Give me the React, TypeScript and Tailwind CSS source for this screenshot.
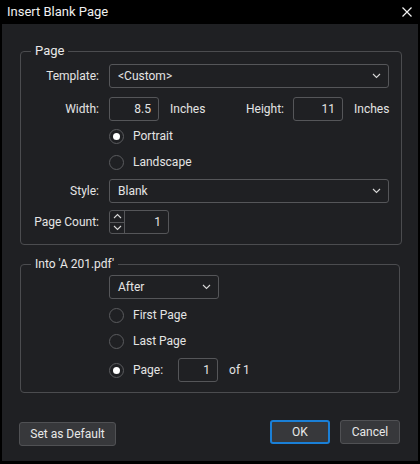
import React from 'react';

const Chevron: React.FC<{ up?: boolean; className?: string }> = ({ up, className }) => (
  <svg width="9" height="6" viewBox="0 0 9 6" className={className} fill="none" stroke="#d8d8d8" strokeWidth="1.1">
    {up ? <path d="M1 5 L4.5 1.5 L8 5" /> : <path d="M1 1 L4.5 4.5 L8 1" />}
  </svg>
);

const Select: React.FC<{ value: string; className?: string }> = ({ value, className }) => (
  <div className={`h-[24px] flex items-center justify-between border border-[#555659] rounded-[3px] pl-[8px] pr-[7px] ${className ?? ''}`}>
    <span>{value}</span>
    <Chevron />
  </div>
);

const Radio: React.FC<{ checked?: boolean; label: string }> = ({ checked, label }) => (
  <div className="flex items-center">
    <div className="w-[15px] h-[15px] rounded-full border border-[#5a5b5e] flex items-center justify-center">
      {checked && <div className="w-[7px] h-[7px] rounded-full bg-white" />}
    </div>
    <span className="ml-[9px]">{label}</span>
  </div>
);

const NumBox: React.FC<{ value: string; className?: string }> = ({ value, className }) => (
  <div className={`h-[24px] border border-[#555659] rounded-[3px] flex items-center justify-end pr-[7px] ${className ?? ''}`}>
    {value}
  </div>
);

const Label: React.FC<{ children: React.ReactNode }> = ({ children }) => (
  <div className="w-[78px] mr-[10px] text-right shrink-0">{children}</div>
);

export default function App() {
  return (
    <div
      className="w-[420px] h-[464px] bg-black flex flex-col text-[12px] text-[#e4e4e4] select-none"
      style={{ fontFamily: 'Roboto, "Liberation Sans", sans-serif' }}
    >
      {/* title bar */}
      <div className="h-[24px] flex items-center justify-between pl-[7px] pr-[8px] text-[#f0f0f0] shrink-0">
        <span className="text-[13px]">Insert Blank Page</span>
        <svg width="10" height="10" viewBox="0 0 10 10" stroke="#f2f2f2" strokeWidth="1.2">
          <path d="M0.5 0.5 L9.5 9.5 M9.5 0.5 L0.5 9.5" />
        </svg>
      </div>

      <div className="mx-[2px] mb-[3px] flex-1 bg-[#1f2023] pt-[19px] px-[18px] flex flex-col">
        {/* Page group */}
        <fieldset className="border border-[#4b4c4f] rounded-[4px] pb-[10px] pr-[12px]">
          <legend className="ml-[10px] px-[4px] leading-[16px] text-[13px] text-[#e8e8e8]">Page</legend>
          <div className="flex flex-col pt-[5px]">
            <div className="flex items-center">
              <Label>Template:</Label>
              <Select value="<Custom>" className="flex-1" />
            </div>
            <div className="flex items-center mt-[9px]">
              <Label>Width:</Label>
              <NumBox value="8.5" className="w-[50px]" />
              <div className="ml-[11px] w-[114px] flex justify-between">
                <span>Inches</span>
                <span>Height:</span>
              </div>
              <NumBox value="11" className="w-[50px] ml-[9px]" />
              <span className="ml-[11px]">Inches</span>
            </div>
            <div className="flex items-center h-[26px] mt-[2px] pl-[88px]">
              <Radio checked label="Portrait" />
            </div>
            <div className="flex items-center h-[26px] pl-[88px]">
              <Radio label="Landscape" />
            </div>
            <div className="flex items-center mt-[4px]">
              <Label>Style:</Label>
              <Select value="Blank" className="flex-1" />
            </div>
            <div className="flex items-center mt-[7px]">
              <Label>Page Count:</Label>
              <div className="w-[60px] h-[24px] border border-[#555659] rounded-[3px] flex">
                <div className="w-[15px] border-r border-[#555659] flex flex-col">
                  <div className="flex-1 flex items-center justify-center border-b border-[#555659]">
                    <Chevron up />
                  </div>
                  <div className="flex-1 flex items-center justify-center">
                    <Chevron />
                  </div>
                </div>
                <div className="flex-1 flex items-center justify-end pr-[7px]">1</div>
              </div>
            </div>
          </div>
        </fieldset>

        {/* Into group */}
        <fieldset className="border border-[#4b4c4f] rounded-[4px] pb-[10px] pr-[12px] mt-[11px]">
          <legend className="ml-[10px] px-[4px] leading-[16px] text-[#e8e8e8]">Into 'A 201.pdf'</legend>
          <div className="flex flex-col pt-[3px] pl-[88px]">
            <Select value="After" className="w-[110px]" />
            <div className="flex items-center h-[26px] mt-[3px]">
              <Radio label="First Page" />
            </div>
            <div className="flex items-center h-[26px]">
              <Radio label="Last Page" />
            </div>
            <div className="flex items-center mt-[4px]">
              <Radio checked label="Page:" />
              <NumBox value="1" className="w-[40px] ml-[15px]" />
              <span className="ml-[11px]">of 1</span>
            </div>
          </div>
        </fieldset>

        {/* buttons */}
        <div className="flex items-start mt-[27px] -ml-[1px]">
          <button className="mt-[2px] w-[97px] h-[24px] bg-[#37383b] border border-[#505154] rounded-[3px] text-[#e8e8e8]">
            Set as Default
          </button>
          <div className="flex-1" />
          <button className="w-[60px] h-[24px] bg-[#37383b] border-2 border-[#1a7fd6] rounded-[3px] text-[#e8e8e8]">
            OK
          </button>
          <button className="ml-[10px] w-[60px] h-[24px] bg-[#37383b] border border-[#505154] rounded-[3px] text-[#e8e8e8]">
            Cancel
          </button>
        </div>
      </div>
    </div>
  );
}
